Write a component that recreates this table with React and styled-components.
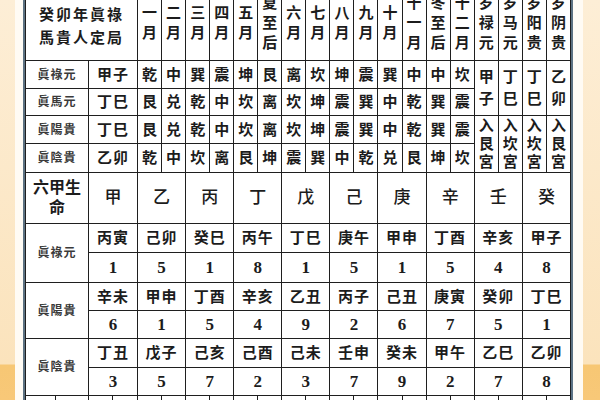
import React from 'react';
import styled, { createGlobalStyle } from 'styled-components';

const GlobalStyle = createGlobalStyle`
  html, body {
    margin: 0;
    padding: 0;
    width: 600px;
    height: 400px;
    overflow: hidden;
    background: linear-gradient(180deg, #fdeed6 0px, #fbe3bc 364px, #f7c774 365px, #f8c878 400px);
  }
  #root {
    height: 400px;
  }
`;

const Page = styled.div`
  height: 400px;
  overflow: hidden;
  display: flex;
  font-family: "Liberation Serif", "Noto Sans CJK SC", serif;
  color: #1c1c1c;
`;

const Paper = styled.div`
  margin-left: 15px;
  width: 568px;
  height: 400px;
  background: #fffbf4;
  padding-left: 8px;
  box-sizing: border-box;
  overflow: hidden;
`;

const Frame = styled.div`
  width: 550px;
  margin-top: -15px;
  background: #ffffff;
  border-left: 2px solid #5d7282;
  border-right: 2px solid #5d7282;
  box-sizing: border-box;
`;

const Grid = styled.table`
  width: 100%;
  table-layout: fixed;
  border-collapse: collapse;
`;

const Row = styled.tr`
  height: ${p => p.$h}px;
`;

const Cell = styled.td`
  padding: ${p => p.$pad || 0};
  border: 1px solid #1f1f1f;
  text-align: center;
  vertical-align: ${p => p.$valign || 'middle'};
  font-size: ${p => p.$size || 15}px;
  font-weight: ${p => p.$weight || 700};
  letter-spacing: ${p => p.$spacing || 0}px;
  line-height: ${p => p.$lh || 20}px;
  color: ${p => p.$muted ? '#3a3a3a' : '#1c1c1c'};
  white-space: nowrap;
  overflow: hidden;
`;

const Char = styled.span`
  display: block;
`;

const Num = styled.span`
  font-family: "Liberation Serif", serif;
  font-weight: 700;
  font-size: 17px;
`;

const Stacked = ({ text }) => (
  <>
    {[...text].map((c, i) => (
      <Char key={i}>{c}</Char>
    ))}
  </>
);

const months = ['一月', '二月', '三月', '四月', '五月', '夏至后', '六月', '七月', '八月', '九月', '十月', '十一月', '冬至后', '十二月', '岁禄元', '岁马元', '岁阳贵', '岁阴贵'];

const topRows = [
  { label: '眞祿元', gz: '甲子', cells: '乾中巽震坤艮离坎坤震巽中中坎', h: 28 },
  { label: '眞馬元', gz: '丁巳', cells: '艮兑乾中坎离坎坤震巽中乾巽震', h: 27 },
  { label: '眞陽貴', gz: '丁巳', cells: '艮兑乾中坎离坎坤震巽中乾巽震', h: 28 },
  { label: '眞陰貴', gz: '乙卯', cells: '乾中坎离艮坤震巽中乾兑艮坤坎', h: 29 },
];

const yearCells = {
  0: ['甲子', '丁巳', '丁巳', '乙卯'],
  2: ['入艮宮', '入坎宮', '入坎宮', '入艮宮'],
};

const stems = '甲乙丙丁戊己庚辛壬癸';

const groups = [
  { label: '眞祿元', gz: ['丙寅', '己卯', '癸巳', '丙午', '丁巳', '庚午', '甲申', '丁酉', '辛亥', '甲子'], nums: [1, 5, 1, 8, 1, 5, 1, 5, 4, 8], h: [29, 30] },
  { label: '眞陽貴', gz: ['辛未', '甲申', '丁酉', '辛亥', '乙丑', '丙子', '己丑', '庚寅', '癸卯', '丁巳'], nums: [6, 1, 5, 4, 9, 2, 6, 7, 5, 1], h: [28, 28] },
  { label: '眞陰貴', gz: ['丁丑', '戊子', '己亥', '己酉', '己未', '壬申', '癸未', '甲午', '乙巳', '乙卯'], nums: [3, 5, 7, 2, 3, 7, 9, 2, 7, 8], h: [29, 28] },
];

export default function App() {
  return (
    <Page>
      <GlobalStyle />
      <Paper>
        <Frame>
          <Grid>
            <colgroup>
              <col style={{ width: 30 }} />
              <col style={{ width: 33 }} />
              <col style={{ width: 24 }} />
              <col style={{ width: 25 }} />
              {months.map((m, i) => (
                <col key={i} />
              ))}
            </colgroup>
            <tbody>
              <Row $h={75}>
                <Cell colSpan={4} $size={15} $spacing={2} $lh={23} $valign="bottom" $pad="0 0 10px">
                  癸卯年眞祿<br />馬貴人定局
                </Cell>
                {months.map((m, i) => (
                  <Cell key={i} $lh={20}>
                    <Stacked text={m} />
                  </Cell>
                ))}
              </Row>

              {topRows.map((r, ri) => (
                <Row key={ri} $h={r.h}>
                  <Cell colSpan={2} $size={12} $spacing={1} $muted>{r.label}</Cell>
                  <Cell colSpan={2} $spacing={1}>{r.gz}</Cell>
                  {[...r.cells].map((c, i) => (
                    <Cell key={i}>{c}</Cell>
                  ))}
                  {yearCells[ri] &&
                    yearCells[ri].map((t, i) => (
                      <Cell key={'y' + i} rowSpan={2} $lh={ri === 0 ? 22 : 18}>
                        <Stacked text={t} />
                      </Cell>
                    ))}
                </Row>
              ))}

              <Row $h={51}>
                <Cell colSpan={2} $size={16} $lh={20}>
                  六甲生<br />命
                </Cell>
                {[...stems].map((s, i) => (
                  <Cell key={i} colSpan={2} $size={17} $weight={500}>{s}</Cell>
                ))}
              </Row>

              {groups.map((g, gi) => (
                <React.Fragment key={gi}>
                  <Row $h={g.h[0]}>
                    <Cell colSpan={2} rowSpan={2} $size={12} $spacing={1} $muted>{g.label}</Cell>
                    {g.gz.map((t, i) => (
                      <Cell key={i} colSpan={2} $spacing={1}>{t}</Cell>
                    ))}
                  </Row>
                  <Row $h={g.h[1]}>
                    {g.nums.map((n, i) => (
                      <Cell key={i} colSpan={2}><Num>{n}</Num></Cell>
                    ))}
                  </Row>
                </React.Fragment>
              ))}

              <Row $h={28}>
                {Array.from({ length: 22 }).map((_, i) => (
                  <Cell key={i} />
                ))}
              </Row>
            </tbody>
          </Grid>
        </Frame>
      </Paper>
    </Page>
  );
}
